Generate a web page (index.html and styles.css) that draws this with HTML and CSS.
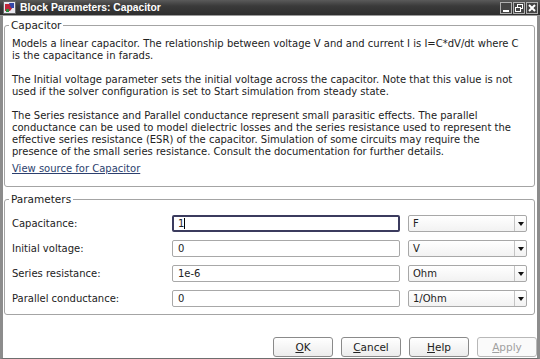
FILE: index.html
```html
<!DOCTYPE html>
<html lang="en">
<head>
    <meta charset="UTF-8">
    <meta name="viewport" content="width=device-width, initial-scale=1.0">
    <title>Block Parameters: Capacitor</title>
    <link rel="stylesheet" href="styles.css">
</head>
<body>
    <div class="window">
        <div class="titlebar">
            <svg class="app-icon" width="13" height="13" viewBox="0 0 13 13">
                <rect x="0.5" y="0.5" width="12" height="12" fill="#e8e8f0" stroke="#666"/>
                <path d="M2 3 L7 3 L10 6 L7 10 L2 10 Z" fill="#c0263a"/>
                <path d="M6 2 L11 2 L11 7 L8 7 Z" fill="#3346a8"/>
                <path d="M3 8 L6 8 L6 11 L3 11 Z" fill="#2c8a3c"/>
            </svg>
            <span class="title">Block Parameters: Capacitor</span>
            <div class="title-buttons">
                <span class="tbtn">
                    <svg width="8" height="8" viewBox="0 0 8 8"><rect x="1" y="6" width="6" height="2" fill="#fff"/></svg>
                </span>
                <span class="tbtn">
                    <svg width="8" height="8" viewBox="0 0 8 8"><rect x="2.5" y="0.5" width="5" height="4" fill="none" stroke="#fff"/><rect x="0.5" y="3.5" width="5" height="4" fill="#444" stroke="#fff"/></svg>
                </span>
                <span class="tbtn">
                    <svg width="8" height="8" viewBox="0 0 8 8"><path d="M1 1 L7 7 M7 1 L1 7" stroke="#fff" stroke-width="2"/></svg>
                </span>
            </div>
        </div>

        <div class="content">
            <fieldset class="group desc">
                <legend>Capacitor</legend>
                <p>Models a linear capacitor. The relationship between voltage V and and current I is I=C*dV/dt where C<br>is the capacitance in farads.</p>
                <p>The Initial voltage parameter sets the initial voltage across the capacitor. Note that this value is not<br>used if the solver configuration is set to Start simulation from steady state.</p>
                <p>The Series resistance and Parallel conductance represent small parasitic effects. The parallel<br>conductance can be used to model dielectric losses and the series resistance used to represent the<br>effective series resistance (ESR) of the capacitor. Simulation of some circuits may require the<br>presence of the small series resistance. Consult the documentation for further details.</p>
                <a class="link" href="#">View source for Capacitor</a>
            </fieldset>

            <fieldset class="group params">
                <legend>Parameters</legend>
                <div class="param-grid">
                    <label>Capacitance:</label>
                    <div class="field focused">1<span class="caret"></span></div>
                    <div class="select"><span class="select-value">F</span><span class="arrow"></span></div>

                    <label>Initial voltage:</label>
                    <div class="field">0</div>
                    <div class="select"><span class="select-value">V</span><span class="arrow"></span></div>

                    <label>Series resistance:</label>
                    <div class="field">1e-6</div>
                    <div class="select"><span class="select-value">Ohm</span><span class="arrow"></span></div>

                    <label>Parallel conductance:</label>
                    <div class="field">0</div>
                    <div class="select"><span class="select-value">1/Ohm</span><span class="arrow"></span></div>
                </div>
            </fieldset>

            <div class="buttons">
                <button><u>O</u>K</button>
                <button><u>C</u>ancel</button>
                <button><u>H</u>elp</button>
                <button class="disabled"><u>A</u>pply</button>
            </div>
        </div>
    </div>
</body>
</html>
```

FILE: styles.css
```css
* {
    box-sizing: border-box;
}
body {
    margin: 0;
    font-family: "DejaVu Sans", sans-serif;
    font-size: 10px;
    color: #222;
    background-color: #fff;
}
.window {
    width: 540px;
    height: 359px;
    border-left: 3px solid #8c8c8c;
    border-right: 3px solid #8c8c8c;
    border-bottom: 1px solid #6e6e6e;
    background-color: #fff;
    display: flex;
    flex-direction: column;
}
.titlebar {
    height: 16px;
    margin: 0 -3px;
    display: flex;
    align-items: center;
    padding: 0 2px 0 3px;
    background: linear-gradient(#5a5a5a, #3a3a3a 40%, #2e2e2e);
    border-bottom: 1px solid #9a9a9a;
    flex-shrink: 0;
}
.app-icon {
    flex-shrink: 0;
}
.title {
    margin-left: 4px;
    color: #fff;
    font-family: "Liberation Sans", sans-serif;
    font-weight: bold;
    font-size: 10.3px;
    flex: 1;
}
.title-buttons {
    display: flex;
    gap: 1px;
}
.tbtn {
    width: 12px;
    height: 12px;
    border: 1px solid #b0b0b0;
    background-color: #444;
    display: flex;
    align-items: center;
    justify-content: center;
}
.content {
    flex: 1;
    padding: 3px 0 0 1px;
    display: flex;
    flex-direction: column;
}
.group {
    margin: 0;
    border: 1px solid #a4a4a4;
    border-radius: 3px;
    padding: 7px 7px 11px 7px;
    width: 531px;
    flex-shrink: 0;
}
.group legend {
    padding: 0 2px;
    margin-left: -3px;
    line-height: 12px;
    font-size: 10.5px;
}
.desc p {
    margin: 0 0 12px;
    line-height: 12px;
    white-space: nowrap;
}
.desc .link {
    display: block;
    margin-top: -7px;
    line-height: 12px;
    color: #2c3f6e;
}
.params {
    margin-top: 6px;
    padding: 10px 7px 7px 7px;
}
.param-grid {
    display: grid;
    grid-template-columns: 152px 228px 119px;
    column-gap: 8px;
    row-gap: 8px;
    align-items: center;
}
.field {
    height: 17px;
    line-height: 15px;
    padding-left: 5px;
    border: 1px solid #a8a8a8;
    border-radius: 2px;
    background-color: #fff;
}
.field.focused {
    border: 2px solid #3b3b5e;
    line-height: 13px;
    padding-left: 4px;
}
.caret {
    display: inline-block;
    width: 1px;
    height: 11px;
    background-color: #000;
    vertical-align: middle;
    margin-top: -2px;
}
.select {
    height: 17px;
    display: flex;
    border: 1px solid #a8a8a8;
    border-radius: 2px;
    background: linear-gradient(#fff, #f2f2f2);
}
.select-value {
    flex: 1;
    line-height: 15px;
    padding-left: 4px;
}
.arrow {
    width: 12px;
    border-left: 1px solid #c4c4c4;
    display: flex;
    align-items: center;
    justify-content: center;
}
.arrow::after {
    content: "";
    border-left: 3px solid transparent;
    border-right: 3px solid transparent;
    border-top: 4px solid #111;
}
.buttons {
    margin-top: auto;
    padding-bottom: 1px;
    display: flex;
    justify-content: flex-end;
    gap: 8px;
}
button {
    width: 60px;
    height: 20px;
    font-family: "DejaVu Sans", sans-serif;
    font-size: 10.5px;
    color: #222;
    border: 1px solid #8a8a8a;
    border-radius: 3px;
    background: linear-gradient(#fff, #ececec);
    padding: 0;
}
button.disabled {
    color: #a0a0a0;
    border-color: #b8b8b8;
    background: #fafafa;
}
```
